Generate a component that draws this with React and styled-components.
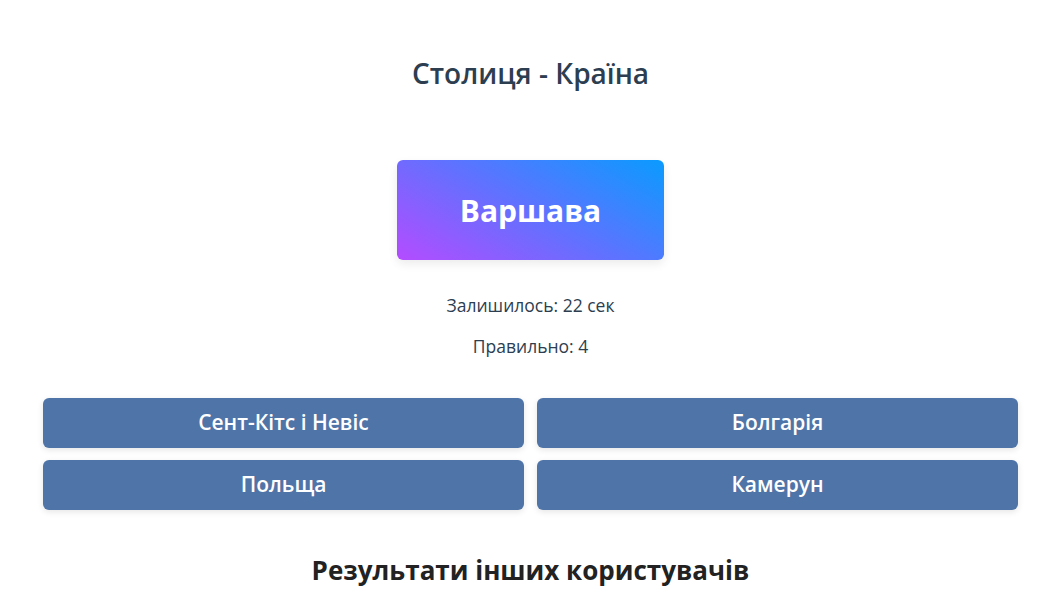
import React from "react";
import styled, { createGlobalStyle } from "styled-components";

const Global = createGlobalStyle`
  html, body {
    margin: 0;
    padding: 0;
    background: #ffffff;
  }
  body {
    font-family: "Open Sans", "Noto Sans", sans-serif;
    color: #2c3e50;
  }
`;

const Page = styled.div`
  padding: 56px 39px 0 43px;
  display: flex;
  flex-direction: column;
  align-items: center;
`;

const Title = styled.h2`
  margin: 0;
  font-size: 28px;
  line-height: 34px;
  font-weight: 600;
  color: #2c3e50;
`;

const Card = styled.div`
  margin-top: 70px;
  width: 267px;
  height: 100px;
  border-radius: 6px;
  background: linear-gradient(30deg, #b44cff 0%, #5f72ff 50%, #0a9bff 100%);
  box-shadow: 0 4px 10px rgba(0, 0, 0, 0.08);
  display: flex;
  align-items: center;
  justify-content: center;
  color: #ffffff;
  font-size: 30px;
  font-weight: 700;
`;

const Info = styled.p`
  margin: ${(p) => p.$top}px 0 0;
  font-size: 17.5px;
  line-height: 22px;
  color: #2c3e50;
`;

const Options = styled.div`
  margin-top: 41px;
  width: 100%;
  display: grid;
  grid-template-columns: 1fr 1fr;
  column-gap: 13px;
  row-gap: 12px;
`;

const Option = styled.button`
  height: 50px;
  padding: 0 0 3px;
  border: none;
  border-radius: 6px;
  background: #4f74a8;
  color: #ffffff;
  font-family: inherit;
  font-size: 21px;
  font-weight: 600;
  box-shadow: 0 2px 6px rgba(0, 0, 0, 0.1);
  cursor: pointer;
`;

const Results = styled.h2`
  margin: 42px 0 0;
  font-size: 26px;
  line-height: 36px;
  font-weight: 700;
  color: #222222;
`;

const options = ["Сент-Кітс і Невіс", "Болгарія", "Польща", "Камерун"];

export default function App() {
  return (
    <>
      <Global />
      <Page>
        <Title>Столиця - Країна</Title>
        <Card>Варшава</Card>
        <Info $top={34}>Залишилось: 22 сек</Info>
        <Info $top={19}>Правильно: 4</Info>
        <Options>
          {options.map((o) => (
            <Option key={o}>{o}</Option>
          ))}
        </Options>
        <Results>Результати інших користувачів</Results>
      </Page>
    </>
  );
}
